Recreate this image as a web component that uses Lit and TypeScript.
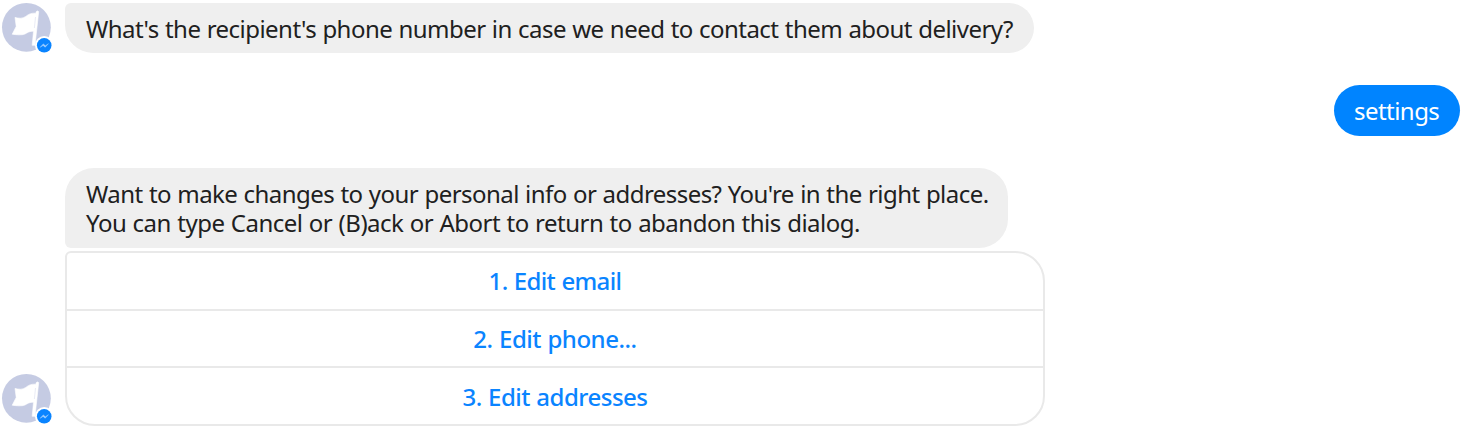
import { LitElement, html, css } from "lit";
import { customElement, property } from "lit/decorators.js";

@customElement("page-avatar")
class PageAvatar extends LitElement {
  static styles = css`
    :host { display: block; width: 54px; height: 54px; }
    svg { display: block; }
  `;
  render() {
    return html`<svg width="54" height="54" viewBox="0 0 54 54">
      <circle cx="26.4" cy="27.3" r="24.4" fill="#c5cbe3" />
      <path d="M15 17.4C19 18.6 22.5 18.6 25.8 16.4C29.2 13.6 31.5 13 35.8 13.2L36.3 11.6Q37.4 10.2 38.7 11.6L35 45.3H32.2L33.5 31.2C30 31 27.6 32.4 25 34C21.5 35.4 16.5 34.8 12.2 34.2L16.2 26.4Z" fill="#fff" stroke="#fff" stroke-width=".6" stroke-linejoin="round" />
      <path d="M35.5 17L34.4 28" stroke="#e6e9f4" stroke-width=".9" fill="none" />
      <circle cx="44.2" cy="45.3" r="9.2" fill="#fff" />
      <circle cx="44.2" cy="45.3" r="7.3" fill="#0a84ff" />
      <path d="M40.2 47.3L43.3 43.9L45.4 45.8L48.4 43.7L45.2 47.2L43.1 45.4Z" fill="#b5daff" stroke="#8cc5ff" stroke-width=".6" />
    </svg>`;
  }
}

@customElement("chat-bubble")
class ChatBubble extends LitElement {
  @property({ attribute: false }) lines: { text: string; spacing: number }[] = [];
  static styles = css`
    :host { display: block; box-sizing: border-box; white-space: nowrap; font-size: 24px; line-height: 29px; word-spacing: 0.6px; }
    .line { display: block; }
  `;
  render() {
    return this.lines.map(
      (l) => html`<span class="line" style="letter-spacing:${l.spacing}px">${l.text}</span>`
    );
  }
}

@customElement("app-root")
class AppRoot extends LitElement {
  options = [
    { text: "1. Edit email", spacing: -0.63 },
    { text: "2. Edit phone...", spacing: -0.47 },
    { text: "3. Edit addresses", spacing: -0.5 },
  ];
  static styles = css`
    :host {
      display: flex; flex-direction: column; box-sizing: border-box;
      width: 1462px; height: 429px; padding-top: 3px; overflow: hidden;
      background: #fff; color: #202020;
      font-family: "Noto Sans", "Open Sans", sans-serif;
    }
    .row { display: flex; }
    .rail { width: 65px; flex: none; display: flex; flex-direction: column; }
    .first { margin-top: -3px; }
    .last { justify-content: flex-end; padding-bottom: 1px; }
    .ask { width: 969px; height: 50px; padding: 11px 0 0 21px; background: #efefef; border-radius: 6px 25px 25px 28px; }
    .top { height: 50px; }
    .mine { justify-content: flex-end; padding: 32px 2.5px 32px 0; }
    .reply { width: 126px; height: 50.5px; padding: 11px 0 0 20.5px; background: #0084ff; color: #fff; border-radius: 26px; }
    .info { width: 943px; height: 80px; padding: 11px 0 0 21px; background: #efefef; border-radius: 29px 29px 29px 6px; }
    .card { box-sizing: border-box; width: 980px; height: 175px; margin-top: 3.5px; border: 2px solid #e9e9e9; border-radius: 6px 30px 30px 30px; overflow: hidden; display: flex; flex-direction: column; }
    .option { flex: 1; box-sizing: border-box; display: flex; align-items: center; justify-content: center; color: #0a84ff; font-size: 24px; font-weight: 500; line-height: 29px; white-space: nowrap; word-spacing: 0.6px; }
    .option + .option { border-top: 2px solid #e9e9e9; }
  `;
  render() {
    return html`
      <div class="row top">
        <div class="rail"><page-avatar class="first"></page-avatar></div>
        <chat-bubble class="ask" .lines=${[{ text: "What's the recipient's phone number in case we need to contact them about delivery?", spacing: -0.54 }]}></chat-bubble>
      </div>
      <div class="row mine">
        <chat-bubble class="reply" .lines=${[{ text: "settings", spacing: -0.54 }]}></chat-bubble>
      </div>
      <div class="row">
        <div class="rail last"><page-avatar></page-avatar></div>
        <div>
          <chat-bubble class="info" .lines=${[
            { text: "Want to make changes to your personal info or addresses? You're in the right place.", spacing: -0.55 },
            { text: "You can type Cancel or (B)ack or Abort to return to abandon this dialog.", spacing: -0.5 },
          ]}></chat-bubble>
          <div class="card">
            ${this.options.map((o) => html`<div class="option"><span style="letter-spacing:${o.spacing}px">${o.text}</span></div>`)}
          </div>
        </div>
      </div>
    `;
  }
}
